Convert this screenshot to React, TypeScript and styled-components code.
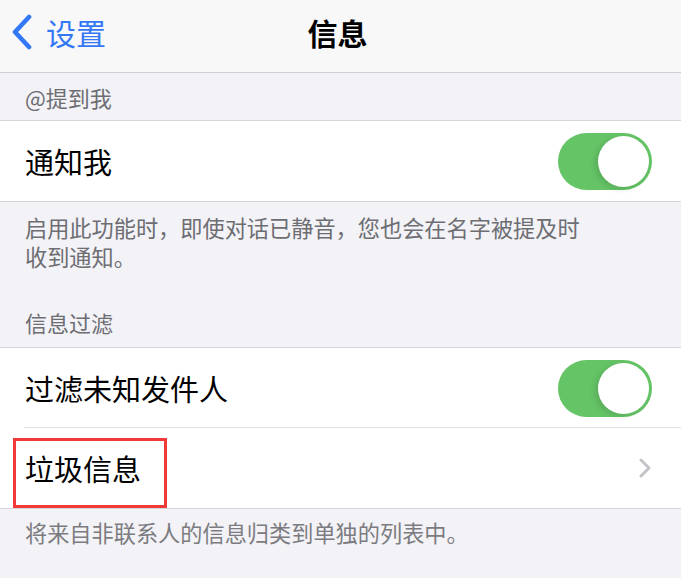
import styled, { createGlobalStyle } from 'styled-components';

const GlobalStyle = createGlobalStyle`
  * {
    box-sizing: border-box;
  }

  body {
    margin: 0;
    background: #f2f2f7;
    font-family: 'Noto Sans CJK SC', 'Noto Sans', sans-serif;
  }
`;

const Toggle = ({ on }: { on: boolean }) => (
  <ToggleTrack $on={on}>
    <ToggleKnob $on={on} />
  </ToggleTrack>
);

const App = () => {
  return (
    <>
      <GlobalStyle />
      <Page>
        <NavBar>
          <BackButton>
            <svg width="24" height="36" viewBox="0 0 24 36">
              <path
                d="M19 3 L5 18 L19 33"
                fill="none"
                stroke="#3478f6"
                strokeWidth="4.6"
                strokeLinecap="round"
                strokeLinejoin="round"
              />
            </svg>
            <BackLabel>设置</BackLabel>
          </BackButton>
          <NavTitle>信息</NavTitle>
          <span />
        </NavBar>

        <SectionHeader $top={10} $bottom={8}>
          @提到我
        </SectionHeader>
        <Group>
          <Row>
            <RowLabel>通知我</RowLabel>
            <Toggle on />
          </Row>
        </Group>
        <SectionFooter $top={11}>
          启用此功能时，即使对话已静音，您也会在名字被提及时收到通知。
        </SectionFooter>

        <SectionHeader $top={37} $bottom={10}>
          信息过滤
        </SectionHeader>
        <Group>
          <Row $divider>
            <RowLabel>过滤未知发件人</RowLabel>
            <Toggle on />
          </Row>
          <Row>
            <RowLabel>垃圾信息</RowLabel>
            <svg width="14" height="22" viewBox="0 0 14 22">
              <path
                d="M3 3 L11 11 L3 19"
                fill="none"
                stroke="#c4c4c8"
                strokeWidth="3"
                strokeLinecap="round"
                strokeLinejoin="round"
              />
            </svg>
            <Highlight />
          </Row>
        </Group>
        <SectionFooter $top={9} $light>
          将来自非联系人的信息归类到单独的列表中。
        </SectionFooter>
      </Page>
    </>
  );
};

const Page = styled.main`
  display: flex;
  flex-direction: column;

  width: 100%;
  min-height: 100vh;

  background: #f2f2f7;
`;

const NavBar = styled.header`
  display: grid;
  align-items: center;

  height: 73px;
  padding: 0 6px 9px 0;
  border-bottom: 1px solid #cfcfd3;

  background: #f8f8f8;
  grid-template-columns: 1fr auto 1fr;
`;

const BackButton = styled.div`
  display: flex;
  align-items: center;
  gap: 12px;

  padding-left: 10px;
`;

const BackLabel = styled.span`
  color: #3478f6;
  font-size: 30px;
  line-height: 36px;
`;

const NavTitle = styled.h1`
  margin: 0;

  color: #000;
  font-size: 30px;
  font-weight: 700;
  line-height: 36px;
`;

const SectionHeader = styled.div<{ $top: number; $bottom: number }>`
  padding: ${(p) => p.$top}px 25px ${(p) => p.$bottom}px;

  color: #6d6d72;
  font-size: 22px;
  line-height: 29px;
`;

const Group = styled.section`
  border-top: 1px solid #d6d6da;
  border-bottom: 1px solid #d6d6da;

  background: #fff;
`;

const Row = styled.div<{ $divider?: boolean }>`
  display: flex;
  position: relative;
  align-items: center;
  justify-content: space-between;

  height: 80px;
  padding: 0 29px 0 25px;

  &::after {
    display: ${(p) => (p.$divider ? 'block' : 'none')};
    position: absolute;
    right: 0;
    bottom: 0;
    left: 24px;

    height: 1px;

    background: #e2e2e5;
    content: '';
  }
`;

const RowLabel = styled.span`
  color: #000;
  font-size: 29px;
  line-height: 36px;
`;

const ToggleTrack = styled.div<{ $on: boolean }>`
  display: flex;
  align-items: center;
  justify-content: ${(p) => (p.$on ? 'flex-end' : 'flex-start')};

  width: 94px;
  height: 57px;
  padding: 3px;
  border-radius: 29px;

  background: ${(p) => (p.$on ? '#65c466' : '#e9e9ea')};
`;

const ToggleKnob = styled.div<{ $on: boolean }>`
  width: 51px;
  height: 51px;
  border-radius: 50%;

  background: #fff;
  box-shadow: -3px 2px 6px rgba(0, 0, 0, 0.12);
`;

const SectionFooter = styled.p<{ $top: number; $light?: boolean }>`
  max-width: 615px;
  margin: 0;
  padding: ${(p) => p.$top}px 25px 0;

  color: ${(p) => (p.$light ? '#7c7c80' : '#6d6d72')};
  font-size: 22.2px;
  line-height: 29px;
`;

const Highlight = styled.div`
  position: absolute;
  top: 10px;
  left: 13px;

  width: 154px;
  height: 70px;
  border: 3px solid #f03a3a;

  pointer-events: none;
`;

export default App;
